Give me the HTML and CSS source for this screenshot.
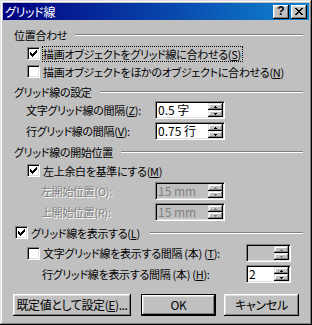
FILE: index.html
```html
<!DOCTYPE html>
<html lang="ja">
<head>
<meta charset="utf-8">
<title>グリッド線</title>
<link rel="stylesheet" href="styles.css">
</head>
<body>
<div class="win">
  <div class="titlebar">
    <span class="title">グリッド線</span>
    <div class="tbtns">
      <span class="tbtn help">?</span>
      <span class="tbtn"><svg class="xicon" width="8" height="7" viewBox="0 0 8 7"><path d="M0 0h2v1h-2zM6 0h2v1h-2zM1 1h2v1h-2zM5 1h2v1h-2zM2 2h4v1h-4zM3 3h2v1h-2zM2 4h4v1h-4zM1 5h2v1h-2zM5 5h2v1h-2zM0 6h2v1h-2zM6 6h2v1h-2z"/></svg></span>
    </div>
  </div>

  <div class="content">
    <div class="group mt8"><span class="gtext">位置合わせ</span><i class="etch"></i></div>

    <div class="chk ind mt3">
      <span class="cb"><svg width="11" height="11" viewBox="0 0 11 11"><path transform="translate(2 2)" d="M6 0h1v1h-1zM5 1h2v1h-2zM0 2h1v1h-1zM4 2h3v1h-3zM0 3h2v1h-2zM3 3h3v1h-3zM0 4h5v1h-5zM1 5h3v1h-3zM2 6h1v1h-1z"/></svg></span>
      <span class="lbl focus">描画オブジェクトをグリッド線に合わせる(<u>S</u>)</span>
    </div>
    <div class="chk ind mt1">
      <span class="cb"></span>
      <span class="lbl">描画オブジェクトをほかのオブジェクトに合わせる(<u>N</u>)</span>
    </div>

    <div class="group mt5"><span class="gtext">グリッド線の設定</span><i class="etch"></i></div>

    <div class="spinrow mt2">
      <span class="slbl">文字グリッド線の間隔(<u>Z</u>):</span>
      <div class="spin"><span class="val">0.5 字</span><span class="ud"><span class="ub"><svg class="arr" width="3" height="2" viewBox="0 0 3 2"><path d="M1 0h1v1h1v1h-3v-1h1z"/></svg></span><span class="ub"><svg class="arr" width="3" height="2" viewBox="0 0 3 2"><path d="M0 0h3v1h-1v1h-1v-1h-1z"/></svg></span></span></div>
    </div>
    <div class="spinrow mt3">
      <span class="slbl">行グリッド線の間隔(<u>V</u>):</span>
      <div class="spin"><span class="val">0.75 行</span><span class="ud"><span class="ub"><svg class="arr" width="3" height="2" viewBox="0 0 3 2"><path d="M1 0h1v1h1v1h-3v-1h1z"/></svg></span><span class="ub"><svg class="arr" width="3" height="2" viewBox="0 0 3 2"><path d="M0 0h3v1h-1v1h-1v-1h-1z"/></svg></span></span></div>
    </div>

    <div class="group mt5"><span class="gtext">グリッド線の開始位置</span><i class="etch"></i></div>

    <div class="chk ind mt3">
      <span class="cb"><svg width="11" height="11" viewBox="0 0 11 11"><path transform="translate(2 2)" d="M6 0h1v1h-1zM5 1h2v1h-2zM0 2h1v1h-1zM4 2h3v1h-3zM0 3h2v1h-2zM3 3h3v1h-3zM0 4h5v1h-5zM1 5h3v1h-3zM2 6h1v1h-1z"/></svg></span>
      <span class="lbl">左上余白を基準にする(<u>M</u>)</span>
    </div>

    <div class="spinrow mt3">
      <span class="slbl deep disabled">左開始位置(O):</span>
      <div class="spin off"><span class="val">15 mm</span><span class="ud"><span class="ub"><svg class="arr" width="3" height="2" viewBox="0 0 3 2"><path d="M1 0h1v1h1v1h-3v-1h1z"/></svg></span><span class="ub"><svg class="arr" width="3" height="2" viewBox="0 0 3 2"><path d="M0 0h3v1h-1v1h-1v-1h-1z"/></svg></span></span></div>
    </div>
    <div class="spinrow mt3">
      <span class="slbl deep disabled">上開始位置(R):</span>
      <div class="spin off"><span class="val">15 mm</span><span class="ud"><span class="ub"><svg class="arr" width="3" height="2" viewBox="0 0 3 2"><path d="M1 0h1v1h1v1h-3v-1h1z"/></svg></span><span class="ub"><svg class="arr" width="3" height="2" viewBox="0 0 3 2"><path d="M0 0h3v1h-1v1h-1v-1h-1z"/></svg></span></span></div>
    </div>

    <div class="chk head mt3">
      <span class="cb"><svg width="11" height="11" viewBox="0 0 11 11"><path transform="translate(2 2)" d="M6 0h1v1h-1zM5 1h2v1h-2zM0 2h1v1h-1zM4 2h3v1h-3zM0 3h2v1h-2zM3 3h3v1h-3zM0 4h5v1h-5zM1 5h3v1h-3zM2 6h1v1h-1z"/></svg></span>
      <span class="lbl">グリッド線を表示する(<u>L</u>)</span>
      <i class="etch"></i>
    </div>

    <div class="spinrow wide mt3">
      <span class="slbl cbcell"><span class="cb"></span><span class="lbl">文字グリッド線を表示する間隔 (本) (<u>T</u>):</span></span>
      <div class="spin off"><span class="val"></span><span class="ud"><span class="ub"><svg class="arr" width="3" height="2" viewBox="0 0 3 2"><path d="M1 0h1v1h1v1h-3v-1h1z"/></svg></span><span class="ub"><svg class="arr" width="3" height="2" viewBox="0 0 3 2"><path d="M0 0h3v1h-1v1h-1v-1h-1z"/></svg></span></span></div>
    </div>
    <div class="spinrow wide mt3">
      <span class="slbl deeper">行グリッド線を表示する間隔 (本) (<u>H</u>):</span>
      <div class="spin"><span class="val">2</span><span class="ud"><span class="ub"><svg class="arr" width="3" height="2" viewBox="0 0 3 2"><path d="M1 0h1v1h1v1h-3v-1h1z"/></svg></span><span class="ub"><svg class="arr" width="3" height="2" viewBox="0 0 3 2"><path d="M0 0h3v1h-1v1h-1v-1h-1z"/></svg></span></span></div>
    </div>

    <div class="btnrow mt11">
      <span class="btn b-default">既定値として設定(<u>E</u>)...</span>
      <span class="btn b-ok">OK</span>
      <span class="btn b-cancel">キャンセル</span>
    </div>
  </div>
</div>
</body>
</html>
```

FILE: styles.css
```css
* { box-sizing: border-box; }
html, body { margin: 0; padding: 0; }
body {
  width: 312px;
  height: 325px;
  overflow: hidden;
  background: #c0c0c0;
  font-family: "Noto Sans CJK JP", "Noto Sans", sans-serif;
  font-size: 11px;
  letter-spacing: -0.3px;
  color: #000;
  font-feature-settings: "palt";
}
u { text-decoration: underline; text-underline-offset: 1px; }

.win {
  width: 312px;
  height: 325px;
  padding: 3px;
  background: #c0c0c0;
  box-shadow: inset -1px -1px #000, inset 1px 1px #dfdfdf, inset -2px -2px #808080, inset 2px 2px #fff;
  display: flex;
  flex-direction: column;
}

.titlebar {
  height: 17px;
  flex: 0 0 17px;
  background: linear-gradient(to right, #000080, #1084d0);
  display: flex;
  align-items: center;
  padding: 0 2px;
}
.title { color: #fff; font-size: 12px; line-height: 17px; flex: 1; white-space: nowrap; }
.tbtns { display: flex; gap: 2px; }
.tbtn {
  width: 16px;
  height: 14px;
  background: #c0c0c0;
  box-shadow: inset -1px -1px #000, inset 1px 1px #fff, inset -2px -2px #808080, inset 2px 2px #dfdfdf;
  display: flex;
  align-items: center;
  justify-content: center;
}
.help {
  font-family: "Liberation Sans", sans-serif;
  font-weight: bold;
  font-size: 12px;
  letter-spacing: 0;
  line-height: 14px;
  padding-bottom: 1px;
}
.xicon { display: block; shape-rendering: crispEdges; }

.content {
  flex: 1;
  display: flex;
  flex-direction: column;
  padding: 0 6px 0 11px;
}
.mt1 { margin-top: 1px; }
.mt2 { margin-top: 2px; }
.mt3 { margin-top: 3px; }
.mt5 { margin-top: 5px; }
.mt8 { margin-top: 8px; }
.mt11 { margin-top: 11px; }

.group { height: 14px; display: flex; align-items: center; line-height: 14px; }
.gtext { white-space: nowrap; }
.etch {
  flex: 1;
  height: 2px;
  margin-left: 8px;
  border-top: 1px solid #808080;
  border-bottom: 1px solid #fff;
}

.chk { height: 17px; display: flex; align-items: center; }
.chk.ind { padding-left: 13px; }
.chk.head { padding-left: 1px; }
.cb {
  width: 13px;
  height: 13px;
  flex: 0 0 13px;
  background: #fff;
  border: 1px solid;
  border-color: #808080 #fff #fff #808080;
  box-shadow: inset 1px 1px #000, inset -1px -1px #dfdfdf;
}
.cb svg { display: block; shape-rendering: crispEdges; }
.lbl {
  margin-left: 2px;
  border: 1px dotted transparent;
  padding: 0 1px 0 0;
  line-height: 14px;
  white-space: nowrap;
}
.lbl.focus { border-color: #000; }

.spinrow {
  height: 18px;
  display: grid;
  grid-template-columns: 141px 70px;
  align-items: center;
}
.spinrow.wide { grid-template-columns: 232px 45px; }
.slbl { padding-left: 12px; white-space: nowrap; line-height: 14px; }
.slbl.deep { padding-left: 27px; }
.slbl.deeper { padding-left: 28px; }
.slbl.cbcell { padding-left: 13px; display: flex; align-items: center; }
.disabled { color: #808080; text-shadow: 1px 1px 0 #fff; }

.spin {
  height: 18px;
  display: flex;
  align-items: stretch;
  background: #fff;
  border: 1px solid;
  border-color: #808080 #fff #fff #808080;
  box-shadow: inset 1px 1px #000, inset -1px -1px #dfdfdf;
  padding: 1px;
}
.spin.off { background: #c0c0c0; }
.val {
  flex: 1;
  min-width: 0;
  font-size: 12px;
  letter-spacing: 0;
  line-height: 14px;
  padding-left: 1px;
  white-space: nowrap;
}
.spin.off .val { color: #808080; }
.ud { width: 15px; flex: 0 0 15px; display: flex; flex-direction: column; }
.ub {
  height: 7px;
  background: #c0c0c0;
  box-shadow: inset -1px -1px #000, inset 1px 1px #dfdfdf, inset -2px -2px #808080, inset 2px 2px #fff;
  display: flex;
  align-items: center;
  justify-content: center;
}
.arr { display: block; shape-rendering: crispEdges; fill: #000; }
.spin.off .arr { fill: #808080; }

.btnrow { height: 22px; display: flex; margin-left: -1px; }
.btn {
  height: 22px;
  display: flex;
  align-items: center;
  justify-content: center;
  background: #c0c0c0;
  box-shadow: inset -1px -1px #000, inset 1px 1px #fff, inset -2px -2px #808080, inset 2px 2px #dfdfdf;
  white-space: nowrap;
  line-height: 14px;
}
.b-default { width: 118px; font-size: 12px; letter-spacing: -0.4px; }
.b-ok {
  width: 75px;
  margin-left: 10px;
  border: 1px solid #000;
  font-size: 12px;
}
.b-cancel { width: 75px; margin-left: 8px; font-size: 12px; }
```
